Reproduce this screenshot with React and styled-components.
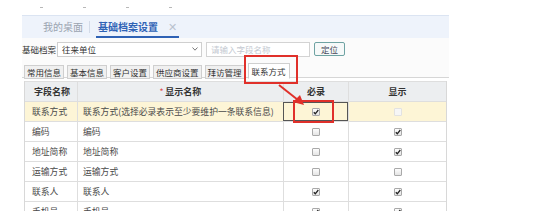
import styled, { createGlobalStyle } from 'styled-components';

const Global = createGlobalStyle`
  html, body { margin: 0; padding: 0; background: #ffffff; }
  body {
    font-family: "Noto Sans CJK SC", "Noto Sans", sans-serif;
    color: #444;
    width: 554px;
    height: 211px;
    overflow: hidden;
  }
`;

// ---------------- layout ----------------
const Page = styled.div`
  position: relative;
  width: 554px;
  height: 211px;
  overflow: hidden;
`;

const Panel = styled.div`
  margin-left: 22px;
  width: 427px;
`;

const TopStrip = styled.div`
  height: 15px;
  display: flex;
  align-items: center;
  gap: 40px;
  padding-left: 18px;
  border-bottom: 1px solid #dbe4f2;
`;

const Dot = styled.span`
  width: 3px;
  height: 1px;
  background: #b8b8b8;
`;

const TabBar = styled.div`
  height: 22px;
  background: #eef3fb;
  display: flex;
  align-items: flex-end;
  padding-left: 21px;
  gap: 6px;
`;

const PageTab = styled.div`
  height: 22px;
  display: flex;
  align-items: center;
  gap: 8px;
  padding: 0 ${p => (p.$active ? '2px' : '0')};
  font-size: 10px;
  color: ${p => (p.$active ? '#2f62b5' : '#9aa3b0')};
  font-weight: ${p => (p.$active ? 600 : 400)};
  border-bottom: 2px solid ${p => (p.$active ? '#2f62b5' : 'transparent')};
  box-sizing: border-box;
`;

const Sep = styled.span`
  width: 1px;
  height: 12px;
  background: #d3dbe8;
  align-self: center;
`;

const Close = styled.span`
  color: #b9c2cf;
  font-weight: 400;
  font-size: 11px;
  margin-left: 2px;
`;

const FormArea = styled.div`
  background: #fbfbfb;
  padding-top: 3px;
  height: 40px;
  box-sizing: border-box;
  border-bottom: 1px solid #d6d6d6;
`;

const FormRow = styled.div`
  display: flex;
  align-items: center;
  height: 16px;
`;

const Label = styled.span`
  font-size: 8.5px;
  color: #333;
  width: 35px;
  white-space: nowrap;
`;

const Select = styled.div`
  width: 145px;
  height: 15px;
  box-sizing: border-box;
  border: 1px solid #cfcfcf;
  background: #fff;
  display: flex;
  align-items: center;
  justify-content: space-between;
  padding: 0 3px 0 4px;
  font-size: 8.5px;
  color: #333;
`;

const Chevron = styled.svg`
  width: 6px;
  height: 4px;
`;

const Input = styled.div`
  margin-left: 4px;
  width: 104px;
  height: 15px;
  box-sizing: border-box;
  border: 1px solid #d3d3d3;
  background: #fff;
  font-size: 8.5px;
  color: #c4c9d1;
  display: flex;
  align-items: center;
  padding-left: 4px;
`;

const Btn = styled.div`
  margin-left: 4px;
  width: 31px;
  height: 14px;
  box-sizing: border-box;
  border: 1px solid #6fa3a3;
  border-radius: 2px;
  background: #f6f9f9;
  font-size: 8.5px;
  color: #445;
  display: flex;
  align-items: center;
  justify-content: center;
`;

const SubTabs = styled.div`
  display: flex;
  align-items: flex-end;
  gap: 3px;
  padding-left: 2px;
  margin-top: 3px;
  height: 18px;
`;

const SubTab = styled.div`
  height: ${p => (p.$active ? '16px' : '14px')};
  box-sizing: border-box;
  padding: 0 ${p => (p.$active ? '3px' : '2px')};
  border: 1px solid #cfcfcf;
  border-bottom: ${p => (p.$active ? '1px solid #fff' : '1px solid #cfcfcf')};
  margin-bottom: -1px;
  background: ${p => (p.$active ? '#ffffff' : '#f0f0f0')};
  font-size: 8.5px;
  color: #333;
  display: flex;
  align-items: center;
  white-space: nowrap;
`;

// ---------------- table ----------------
const Table = styled.div`
  margin: 3px 0 0 2px;
  width: 421px;
  border-left: 1px solid #d8d8d8;
  border-right: 1px solid #d8d8d8;
`;

const Row = styled.div`
  display: grid;
  grid-template-columns: 52px 206px 65px 1fr;
  height: 20px;
  background: ${p => (p.$head ? '#eceef0' : p.$hl ? '#fdf5d6' : '#ffffff')};
  border-top: 1px solid #dedede;
  box-sizing: border-box;
`;

const Cell = styled.div`
  display: flex;
  align-items: center;
  justify-content: ${p => (p.$center ? 'center' : 'flex-start')};
  padding-left: ${p => (p.$center ? '0' : p.$pad || '5px')};
  border-left: ${p => (p.$first ? 'none' : '1px solid #dedede')};
  font-size: ${p => (p.$head ? '9px' : '8.8px')};
  font-weight: ${p => (p.$head ? 700 : 400)};
  color: ${p => (p.$head ? '#333' : '#4a4a4a')};
  white-space: nowrap;
  overflow: hidden;
  box-sizing: border-box;
  outline: ${p => (p.$focus ? '1px solid #555' : 'none')};
  outline-offset: -1px;
`;

const Star = styled.span`
  color: #e05050;
  font-size: 7px;
  margin-right: 2px;
  align-self: flex-start;
  margin-top: 4px;
`;

const Box = styled.span`
  width: 8px;
  height: 8px;
  box-sizing: border-box;
  border: 1px solid ${p => (p.$disabled ? '#e2e2e2' : '#a9a9a9')};
  border-radius: 1px;
  background: ${p => (p.$disabled ? '#f6f6f6' : 'linear-gradient(#fdfdfd, #e4e4e4)')};
  display: flex;
  align-items: center;
  justify-content: center;
`;

const Check = ({ on, disabled }) => (
  <Box $disabled={disabled}>
    {on && (
      <svg width="6" height="6" viewBox="0 0 6 6">
        <path d="M0.8 3.2 L2.3 4.8 L5.3 1" stroke="#222" strokeWidth="1.3" fill="none" />
      </svg>
    )}
  </Box>
);

// ---------------- annotations ----------------
const Mark = styled.div`
  position: absolute;
  left: ${p => p.$x}px;
  top: ${p => p.$y}px;
  width: ${p => p.$w}px;
  height: ${p => p.$h}px;
  border: 2px solid #e0302a;
  box-sizing: border-box;
  pointer-events: none;
`;

const Arrow = styled.svg`
  position: absolute;
  left: 276px;
  top: 82px;
  width: 32px;
  height: 26px;
`;

const rows = [
  { key: '联系方式', name: '联系方式(选择必录表示至少要维护一条联系信息)', req: true, show: false, hl: true },
  { key: '编码', name: '编码', req: false, show: true },
  { key: '地址简称', name: '地址简称', req: false, show: true },
  { key: '运输方式', name: '运输方式', req: false, show: false },
  { key: '联系人', name: '联系人', req: true, show: true },
  { key: '手机号', name: '手机号', req: true, show: true },
];

const subTabs = ['常用信息', '基本信息', '客户设置', '供应商设置', '拜访管理', '联系方式'];

export default function App() {
  return (
    <Page>
      <Global />
      <Panel>
        <TopStrip>
          <Dot />
          <Dot />
          <Dot />
          <Dot />
        </TopStrip>
        <TabBar>
          <PageTab>我的桌面</PageTab>
          <Sep />
          <PageTab $active>
            基础档案设置<Close>✕</Close>
          </PageTab>
        </TabBar>
        <FormArea>
          <FormRow>
            <Label>基础档案</Label>
            <Select>
              往来单位
              <Chevron viewBox="0 0 6 4">
                <path d="M0.5 0.5 L3 3.2 L5.5 0.5" stroke="#777" strokeWidth="1" fill="none" />
              </Chevron>
            </Select>
            <Input>请输入字段名称</Input>
            <Btn>定位</Btn>
          </FormRow>
          <SubTabs>
            {subTabs.map(t => (
              <SubTab key={t} $active={t === '联系方式'}>{t}</SubTab>
            ))}
          </SubTabs>
        </FormArea>
        <Table>
          <Row $head>
            <Cell $head $first $pad="9px">字段名称</Cell>
            <Cell $head $center><Star>*</Star>显示名称</Cell>
            <Cell $head $center>必录</Cell>
            <Cell $head $center>显示</Cell>
          </Row>
          {rows.map((r, i) => (
            <Row key={r.key} $hl={r.hl}>
              <Cell $first $pad="7px">{r.key}</Cell>
              <Cell>{r.name}</Cell>
              <Cell $center $focus={i === 0}><Check on={r.req} /></Cell>
              <Cell $center><Check on={r.show} disabled={i === 0} /></Cell>
            </Row>
          ))}
        </Table>
      </Panel>

      <Mark $x={244} $y={55} $w={54} $h={29} />
      <Mark $x={293} $y={100} $w={41} $h={23} />
      <Arrow viewBox="0 0 32 26">
        <line x1="3" y1="3" x2="22" y2="18" stroke="#e0302a" strokeWidth="2" />
        <path d="M28 23 L17 20 L24 13 Z" fill="#e0302a" />
      </Arrow>
    </Page>
  );
}
